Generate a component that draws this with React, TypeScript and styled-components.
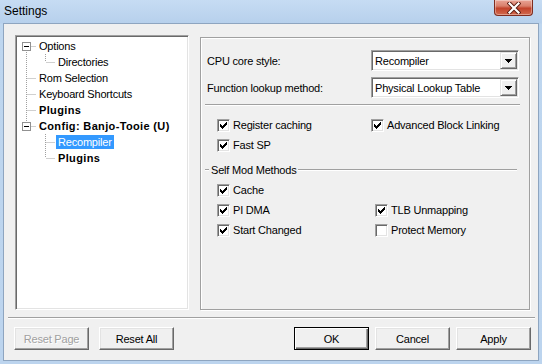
import React from "react";
import styled, { createGlobalStyle, css } from "styled-components";

const Global = createGlobalStyle`
  html, body { margin: 0; padding: 0; }
  body {
    width: 542px; height: 364px; overflow: hidden;
    background: #bcd4ee;
    font-family: "Liberation Sans", Arial, sans-serif;
    font-size: 11px;
    letter-spacing: -0.2px;
    color: #000;
  }
`;

const Window = styled.div`
  width: 542px; height: 364px; box-sizing: border-box;
  display: flex; flex-direction: column;
  padding: 0 3px 3px 3px;
  background: linear-gradient(to bottom, #c6dcf3 0px, #b7d0ec 23px, #bed6ef 24px, #bcd4ee 100%);
`;

const TitleBar = styled.div`
  height: 23px; flex: none;
  display: flex; align-items: flex-start;
`;

const Title = styled.div`
  font-family: "Liberation Sans", Arial, sans-serif;
  font-size: 12px; line-height: 23px; padding-left: 1px; color: #000; letter-spacing: 0;
`;

const CloseBtn = styled.div`
  margin-left: auto; margin-right: 6px;
  width: 39px; height: 16px; box-sizing: border-box;
  border: 1px solid #7f2c1f; border-top: none;
  border-radius: 0 0 4px 4px;
  background: linear-gradient(to bottom, #e9a496 0%, #d9806c 40%, #c2432b 55%, #d26a4f 100%);
  box-shadow: inset 0 0 0 1px rgba(255,255,255,0.35);
  display: flex; align-items: center; justify-content: center;
`;

const Client = styled.div`
  flex: 1; display: flex; flex-direction: column;
  background: #f0f0f0;
  border: 1px solid #8ea5c0;
  padding-top: 11px;
`;

const Body = styled.div`
  display: flex; padding-left: 11px; gap: 11px;
`;

const Tree = styled.div`
  width: 174px; height: 275px; box-sizing: border-box;
  background: #fff;
  border: 1px solid; border-color: #a0a0a0 #fff #fff #a0a0a0;
  box-shadow: inset 1px 1px 0 #696969, inset -1px -1px 0 #e3e3e3;
  padding: 2px 1px 1px 1px;
`;

const TreeRow = styled.div`
  height: 16px; display: flex; align-items: center;
`;

const TreeLabel = styled.span<{ $bold?: boolean; $selected?: boolean }>`
  margin-left: 1px; padding: 0 2px; line-height: 14px; white-space: nowrap;
  ${(p) => (p.$bold ? css`font-weight: bold; letter-spacing: 0.35px;` : css`font-weight: normal;`)}
  ${(p) => p.$selected && css`background: #3399ff; color: #fff;`}
`;

const Panel = styled.div`
  width: 330px; height: 273px; margin-top: 2px; box-sizing: border-box;
  border: 1px solid #a0a0a0;
  box-shadow: inset 1px 1px 0 #fff, 1px 1px 0 #fff;
  display: flex; flex-direction: column;
`;

const ComboGrid = styled.div`
  margin-top: 12px; padding-left: 6px;
  display: grid; grid-template-columns: 164px 148px; grid-auto-rows: 21px; row-gap: 6px;
  align-items: center;
`;

const Combo = styled.div`
  width: 148px; height: 21px; box-sizing: border-box; background: #fff;
  border: 1px solid; border-color: #a0a0a0 #fff #fff #a0a0a0;
  box-shadow: inset 1px 1px 0 #696969, inset -1px -1px 0 #e3e3e3;
  display: flex; align-items: center; padding: 1px 1px 1px 1px;
`;

const ComboText = styled.span`
  flex: 1; padding-left: 2px; white-space: nowrap;
`;

const ComboArrow = styled.span`
  width: 17px; height: 17px; box-sizing: border-box; flex: none;
  background: #f0f0f0;
  border: 1px solid; border-color: #e3e3e3 #696969 #696969 #e3e3e3;
  box-shadow: inset 1px 1px 0 #fff, inset -1px -1px 0 #a0a0a0;
  display: flex; align-items: center; justify-content: center;
`;

const EtchedLine = styled.div<{ $w?: number }>`
  height: 0; box-sizing: border-box;
  border-top: 1px solid #a0a0a0; border-bottom: 1px solid #fff;
  ${(p) => (p.$w ? css`width: ${p.$w}px;` : css`flex: 1;`)}
`;

const PanelSep = styled.div`
  margin: 6px 0 0 4px; width: 315px;
  display: flex;
`;

const CheckGrid = styled.div<{ $col: number; $top: number }>`
  margin-top: ${(p) => p.$top}px; padding-left: 16px;
  display: grid; grid-template-columns: ${(p) => p.$col}px auto; grid-auto-rows: 20px;
  align-items: center;
`;

const CheckItem = styled.label`
  display: flex; align-items: center; gap: 3px; white-space: nowrap;
`;

const Box = styled.span`
  width: 13px; height: 13px; box-sizing: border-box; background: #fff; flex: none;
  border: 1px solid; border-color: #a0a0a0 #fff #fff #a0a0a0;
  box-shadow: inset 1px 1px 0 #696969, inset -1px -1px 0 #e3e3e3;
  display: flex; align-items: center; justify-content: center;
`;

const GroupHeader = styled.div`
  margin: 5px 0 0 4px; width: 312px; height: 20px;
  display: flex; align-items: center;
`;

const GroupTitle = styled.span`
  padding: 0 2px; white-space: nowrap;
`;

const FooterSep = styled.div`
  margin: 7px 3px 0 4px; display: flex;
`;

const ButtonRow = styled.div`
  margin-top: 8px; padding: 0 7px 0 10px;
  display: flex; gap: 6px;
`;

const Spacer = styled.div`flex: 1;`;

const Btn = styled.button<{ $default?: boolean; $gapLeft?: number }>`
  width: 75px; height: 23px; box-sizing: border-box; padding: 0;
  font-family: "Liberation Sans", Arial, sans-serif; font-size: 11px; color: #000;
  letter-spacing: -0.2px;
  background: #f0f0f0;
  border: 1px solid; border-color: #fff #696969 #696969 #fff;
  box-shadow: inset -1px -1px 0 #a0a0a0, inset 1px 1px 0 #e3e3e3;
  margin-left: ${(p) => p.$gapLeft ?? 0}px;
  ${(p) =>
    p.$default &&
    css`
      border-color: #000;
      box-shadow: inset 1px 1px 0 #fff, inset -1px -1px 0 #696969, inset -2px -2px 0 #a0a0a0;
    `}
  &:disabled { color: #a0a0a0; text-shadow: 1px 1px 0 #fff; }
`;

type Seg = "pipe" | "tee" | "elbow" | "first" | "blank";

const Gutter = ({ segs, exp }: { segs: Seg[]; exp?: boolean }) => {
  const w = segs.length * 19;
  const last = segs.length - 1;
  return (
    <svg width={w} height={16} style={{ flex: "none", display: "block" }}>
      {segs.map((s, i) => {
        const cx = i * 19 + 9.5;
        const stroke = { stroke: "#a0a0a0", strokeWidth: 1, strokeDasharray: "1 1" } as const;
        const parts: React.ReactNode[] = [];
        if (s === "pipe" || s === "tee") parts.push(<line key="v" x1={cx} y1={0} x2={cx} y2={16} {...stroke} />);
        if (s === "elbow") parts.push(<line key="v" x1={cx} y1={0} x2={cx} y2={8} {...stroke} />);
        if (s === "first") parts.push(<line key="v" x1={cx} y1={8} x2={cx} y2={16} {...stroke} />);
        if (s === "tee" || s === "elbow" || s === "first")
          parts.push(<line key="h" x1={cx + 1} y1={8.5} x2={i * 19 + 19} y2={8.5} {...stroke} />);
        if (exp && i === last) {
          parts.push(
            <g key="e">
              <rect x={i * 19 + 5.5} y={4.5} width={8} height={8} fill="#fff" stroke="#919191" />
              <line x1={i * 19 + 7} y1={8.5} x2={i * 19 + 12} y2={8.5} stroke="#000" />
            </g>
          );
        }
        return <g key={i}>{parts}</g>;
      })}
    </svg>
  );
};

const Check = ({ on }: { on: boolean }) => (
  <Box>
    {on && (
      <svg width={7} height={7} style={{ display: "block" }} shapeRendering="crispEdges">
        {[2, 3, 4, 3, 2, 1, 0].map((t, c) => (
          <rect key={c} x={c} y={t} width={1} height={3} fill="#000" />
        ))}
      </svg>
    )}
  </Box>
);

const CheckBox = ({ label, on }: { label: string; on: boolean }) => (
  <CheckItem>
    <Check on={on} />
    <span>{label}</span>
  </CheckItem>
);

const Arrow = () => (
  <svg width={7} height={4} style={{ display: "block" }} shapeRendering="crispEdges">
    <rect x={0} y={0} width={7} height={1} fill="#000" />
    <rect x={1} y={1} width={5} height={1} fill="#000" />
    <rect x={2} y={2} width={3} height={1} fill="#000" />
    <rect x={3} y={3} width={1} height={1} fill="#000" />
  </svg>
);

const treeRows: { segs: Seg[]; exp?: boolean; label: string; bold?: boolean; selected?: boolean }[] = [
  { segs: ["first"], exp: true, label: "Options" },
  { segs: ["pipe", "elbow"], label: "Directories" },
  { segs: ["tee"], label: "Rom Selection" },
  { segs: ["tee"], label: "Keyboard Shortcuts" },
  { segs: ["tee"], label: "Plugins", bold: true },
  { segs: ["elbow"], exp: true, label: "Config: Banjo-Tooie (U)", bold: true },
  { segs: ["blank", "tee"], label: "Recompiler", selected: true },
  { segs: ["blank", "elbow"], label: "Plugins", bold: true },
];

export default function App() {
  return (
    <>
      <Global />
      <Window>
        <TitleBar>
          <Title>Settings</Title>
          <CloseBtn>
            <svg width={14} height={12} viewBox="0 0 14 12" style={{ display: "block" }}>
              <path d="M2.5 1.5 L11.5 10.5 M11.5 1.5 L2.5 10.5" stroke="#5a1a10" strokeWidth={4} strokeLinecap="square" />
              <path d="M2.5 1.5 L11.5 10.5 M11.5 1.5 L2.5 10.5" stroke="#fff" strokeWidth={2.2} strokeLinecap="square" />
            </svg>
          </CloseBtn>
        </TitleBar>
        <Client>
          <Body>
            <Tree>
              {treeRows.map((r, i) => (
                <TreeRow key={i}>
                  <Gutter segs={r.segs} exp={r.exp} />
                  <TreeLabel $bold={r.bold} $selected={r.selected}>{r.label}</TreeLabel>
                </TreeRow>
              ))}
            </Tree>
            <Panel>
              <ComboGrid>
                <span>CPU core style:</span>
                <Combo>
                  <ComboText>Recompiler</ComboText>
                  <ComboArrow><Arrow /></ComboArrow>
                </Combo>
                <span>Function lookup method:</span>
                <Combo>
                  <ComboText>Physical Lookup Table</ComboText>
                  <ComboArrow><Arrow /></ComboArrow>
                </Combo>
              </ComboGrid>
              <PanelSep><EtchedLine /></PanelSep>
              <CheckGrid $col={154} $top={9}>
                <CheckBox label="Register caching" on />
                <CheckBox label="Advanced Block Linking" on />
                <CheckBox label="Fast SP" on />
              </CheckGrid>
              <GroupHeader>
                <EtchedLine $w={4} />
                <GroupTitle>Self Mod Methods</GroupTitle>
                <EtchedLine />
              </GroupHeader>
              <CheckGrid $col={158} $top={0}>
                <CheckBox label="Cache" on />
                <span />
                <CheckBox label="PI DMA" on />
                <CheckBox label="TLB Unmapping" on />
                <CheckBox label="Start Changed" on />
                <CheckBox label="Protect Memory" on={false} />
              </CheckGrid>
            </Panel>
          </Body>
          <FooterSep><EtchedLine /></FooterSep>
          <ButtonRow>
            <Btn disabled>Reset Page</Btn>
            <Btn $gapLeft={4}>Reset All</Btn>
            <Spacer />
            <Btn $default>OK</Btn>
            <Btn>Cancel</Btn>
            <Btn>Apply</Btn>
          </ButtonRow>
        </Client>
      </Window>
    </>
  );
}
